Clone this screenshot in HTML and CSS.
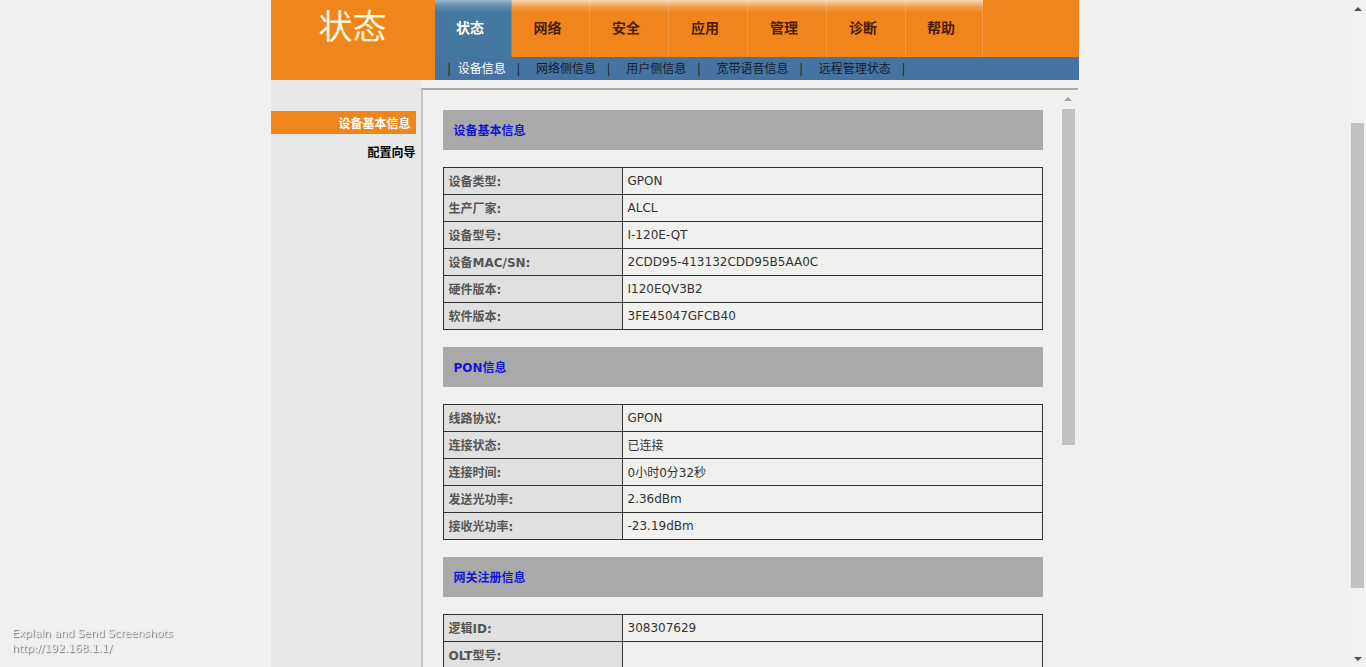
FILE: index.html
```html
<!DOCTYPE html>
<html lang="zh-CN">
<head>
<meta charset="utf-8">
<title>状态 - 设备信息</title>
<link rel="stylesheet" href="styles.css">
</head>
<body>
<div class="screen">
  <div class="viewport">
    <div class="page">
      <header class="header">
        <div class="logo"><span class="logo-text">状态</span></div>
        <div class="nav">
          <div class="tabs">
            <div class="tab active w77">状态</div>
            <div class="tab w78">网络</div>
            <div class="tab w79">安全</div>
            <div class="tab w79">应用</div>
            <div class="tab w79">管理</div>
            <div class="tab w79">诊断</div>
            <div class="tab w77">帮助</div>
            <div class="tab-fill"></div>
          </div>
          <div class="subnav">
            <span class="sep first">|</span><span class="sub active">设备信息</span>
            <span class="sep">|</span><span class="sub">网络侧信息</span>
            <span class="sep">|</span><span class="sub">用户侧信息</span>
            <span class="sep">|</span><span class="sub">宽带语音信息</span>
            <span class="sep">|</span><span class="sub">远程管理状态</span>
            <span class="sep">|</span>
          </div>
        </div>
      </header>
      <div class="main">
        <aside class="sidebar">
          <div class="side-item active">设备基本信息</div>
          <div class="side-item">配置向导</div>
        </aside>
        <div class="frame">
          <div class="frame-content">
            <section class="section">
              <div class="sec-head">设备基本信息</div>
              <table class="info">
                <tr><td class="lbl">设备类型:</td><td>GPON</td></tr>
                <tr><td class="lbl">生产厂家:</td><td>ALCL</td></tr>
                <tr><td class="lbl">设备型号:</td><td>I-120E-QT</td></tr>
                <tr><td class="lbl">设备MAC/SN:</td><td>2CDD95-413132CDD95B5AA0C</td></tr>
                <tr><td class="lbl">硬件版本:</td><td>I120EQV3B2</td></tr>
                <tr><td class="lbl">软件版本:</td><td>3FE45047GFCB40</td></tr>
              </table>
            </section>
            <section class="section">
              <div class="sec-head">PON信息</div>
              <table class="info">
                <tr><td class="lbl">线路协议:</td><td>GPON</td></tr>
                <tr><td class="lbl">连接状态:</td><td>已连接</td></tr>
                <tr><td class="lbl">连接时间:</td><td>0小时0分32秒</td></tr>
                <tr><td class="lbl">发送光功率:</td><td>2.36dBm</td></tr>
                <tr><td class="lbl">接收光功率:</td><td>-23.19dBm</td></tr>
              </table>
            </section>
            <section class="section">
              <div class="sec-head">网关注册信息</div>
              <table class="info">
                <tr><td class="lbl">逻辑ID:</td><td>308307629</td></tr>
                <tr><td class="lbl">OLT型号:</td><td></td></tr>
              </table>
            </section>
          </div>
          <div class="frame-scroll">
            <div class="sb-arrow"><span class="tri-up"></span></div>
            <div class="sb-thumb inner-thumb"></div>
          </div>
        </div>
      </div>
    </div>
  </div>
  <div class="vscroll">
    <div class="sb-arrow"><span class="tri-up dark"></span></div>
    <div class="vs-gap-top"></div>
    <div class="sb-thumb outer-thumb"></div>
    <div class="vs-gap-bottom"></div>
    <div class="sb-arrow"><span class="tri-down dark"></span></div>
  </div>
</div>
<div class="overlay">
  <div>Explain and Send Screenshots</div>
  <div>http://192.168.1.1/</div>
</div>
</body>
</html>
```
FILE: styles.css
```css
html, body {
  margin: 0;
  padding: 0;
  height: 667px;
  overflow: hidden;
  background: #f0f0ee;
  font-family: "DejaVu Sans", "Noto Sans CJK SC", sans-serif;
  font-size: 12px;
}
.screen {
  display: flex;
  height: 667px;
}
.viewport {
  flex: 1;
  display: flex;
  justify-content: center;
  overflow: hidden;
}
.page {
  width: 808px;
  display: flex;
  flex-direction: column;
}
.header {
  display: flex;
  height: 80px;
}
.logo {
  width: 164px;
  background: #f0851c;
  display: flex;
  justify-content: center;
  align-items: flex-start;
}
.logo-text {
  color: #fff6de;
  font-family: "Noto Sans CJK SC", serif;
  font-size: 34px;
  line-height: normal;
}
.nav {
  flex: 1;
  display: flex;
  flex-direction: column;
}
.tabs {
  display: flex;
  height: 57px;
}
.tab {
  background: linear-gradient(to bottom, #f9d9b6 0px, #f4a458 6px, #f0851c 13px, #f0851c 100%);
  box-shadow: inset -1px 0 0 rgba(255,255,255,0.15);
  color: #4a1c05;
  font-weight: bold;
  font-size: 14px;
  display: flex;
  align-items: center;
  justify-content: center;
  padding: 0 6px 4px 0;
  box-sizing: border-box;
}
.tab.active {
  background: linear-gradient(to bottom, #9ab8cc 0px, #5f8cae 6px, #45789f 13px, #45789f 100%);
  color: #ffffff;
}
.w77 { width: 77px; }
.w78 { width: 78px; }
.w79 { width: 79px; }
.tab-fill {
  flex: 1;
  background: #f0851c;
}
.subnav {
  height: 23px;
  background: #46739f;
  display: flex;
  align-items: center;
  padding: 0 0 3px 13px;
  box-sizing: border-box;
  color: #121c2e;
  font-family: "Noto Sans CJK SC", sans-serif;
  font-size: 12px;
}
.sep {
  color: #101820;
  padding-right: 16px;
}
.sep.first {
  padding-right: 7px;
}
.sub {
  padding-right: 11px;
}
.sub.active {
  color: #ffffff;
}
.main {
  flex: 1;
  display: flex;
  min-height: 0;
}
.sidebar {
  width: 150px;
  background: #e8e8e6;
  padding-top: 31px;
  box-sizing: border-box;
}
.side-item {
  width: 145px;
  height: 23px;
  line-height: 23px;
  text-align: right;
  padding-right: 0;
  box-sizing: border-box;
  font-family: "Noto Sans CJK SC", sans-serif;
  font-weight: bold;
  font-size: 12px;
  color: #000;
  margin-bottom: 6px;
}
.side-item.active {
  background: #f0851c;
  color: #ffffff;
  padding-right: 5px;
}
.frame {
  width: 658px;
  margin-top: 8px;
  border-top: 2px solid #a9a9a9;
  border-left: 2px solid #c4c4c4;
  border-right: 2px solid #f0f0ee;
  box-sizing: border-box;
  display: flex;
  background: #f0f0ee;
}
.frame-content {
  width: 600px;
  padding: 20px 17px 0 20px;
}
.section {
  margin-bottom: 17px;
}
.sec-head {
  height: 38px;
  padding-top: 2px;
  background: #a9a9a9;
  color: #1414d6;
  font-weight: bold;
  font-size: 12px;
  line-height: 39px;
  padding-left: 11px;
}
.info {
  margin-top: 17px;
  width: 600px;
  border-collapse: collapse;
  table-layout: fixed;
}
.info td {
  border: 1px solid #333333;
  height: 27px;
  padding: 0 5px 1px 5px;
  color: #333333;
  font-size: 12px;
  box-sizing: border-box;
}
.info td.lbl {
  width: 179px;
  background: #e0e0e0;
  color: #555555;
  font-weight: bold;
}
.frame-scroll {
  width: 17px;
  display: flex;
  flex-direction: column;
  align-items: center;
  background: #f0f0ee;
}
.sb-arrow {
  height: 17px;
  width: 17px;
  display: flex;
  align-items: center;
  justify-content: center;
}
.tri-up {
  width: 0;
  height: 0;
  border-left: 4px solid transparent;
  border-right: 4px solid transparent;
  border-bottom: 4px solid #a3a3a3;
}
.tri-down {
  width: 0;
  height: 0;
  border-left: 4px solid transparent;
  border-right: 4px solid transparent;
  border-top: 4px solid #a3a3a3;
}
.tri-up.dark { border-bottom-color: #505050; }
.tri-down.dark { border-top-color: #505050; }
.sb-thumb {
  width: 13px;
  background: #c1c1c1;
}
.inner-thumb {
  height: 336px;
  margin-top: 2px;
}
.vscroll {
  width: 17px;
  display: flex;
  flex-direction: column;
  align-items: center;
  background: #f1f1f0;
}
.vs-gap-top { height: 106px; }
.outer-thumb { height: 465px; }
.vs-gap-bottom { flex: 1; }
.overlay {
  position: fixed;
  left: 12px;
  top: 626px;
  font-family: "DejaVu Sans", sans-serif;
  font-size: 11px;
  line-height: 15px;
  color: #ececec;
  text-shadow: 1px 1px 1px #7a7a7a;
  letter-spacing: -0.2px;
}
```
